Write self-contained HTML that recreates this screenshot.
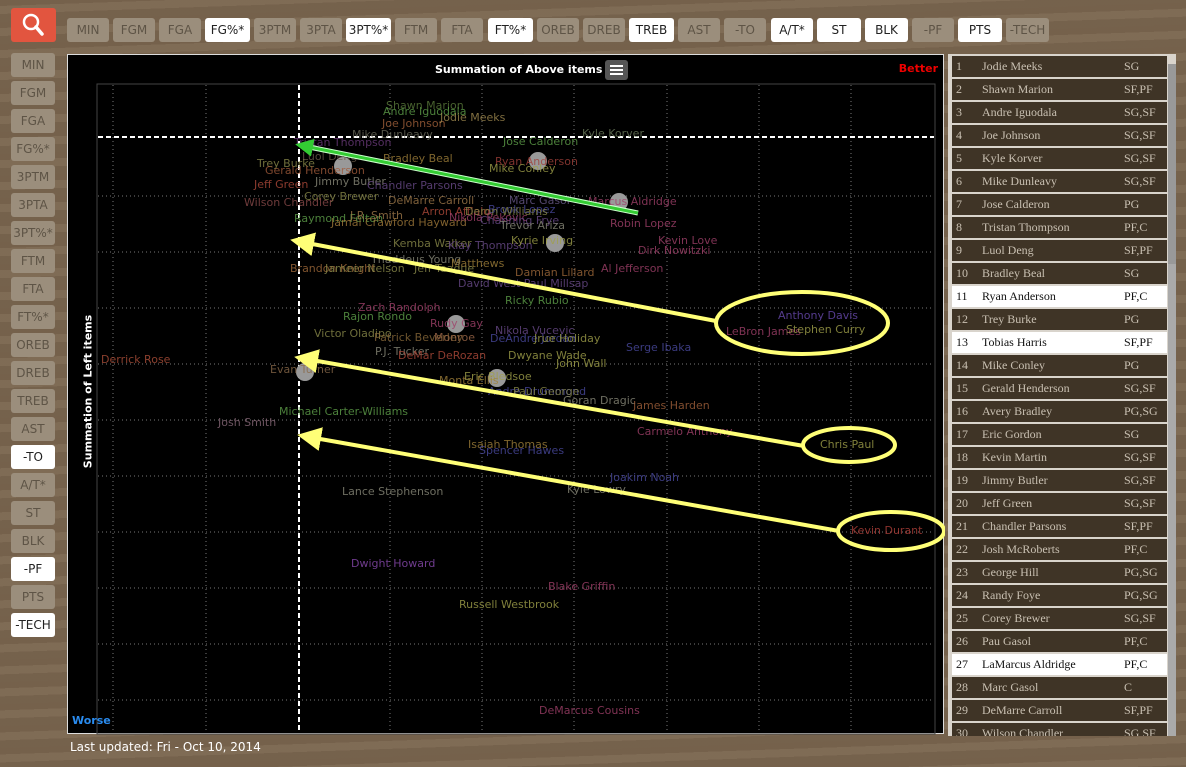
<!DOCTYPE html>
<html><head><meta charset="utf-8"><style>
*{margin:0;padding:0;box-sizing:border-box}
body{width:1186px;height:767px;overflow:hidden;background:#7a6650;background-image:repeating-linear-gradient(178deg,rgba(60,40,20,.08) 0 6px,rgba(255,240,210,.04) 6px 14px,rgba(40,25,10,.06) 14px 22px);font-family:"DejaVu Sans","Liberation Sans",sans-serif;position:relative}
.b{position:absolute;height:24px;background:#9b8e7c;color:#5e5446;font-size:12px;text-align:center;line-height:24px;border-radius:3px}
.w{background:#fff;color:#222}
#chart{position:absolute;left:67px;top:54px;width:877px;height:680px;background:#000;border:1px solid #ddd}
.t{position:absolute;font-size:11px;white-space:nowrap;line-height:12px;opacity:.8}
#list{position:absolute;left:948px;top:54px;width:228px;height:682px;background:#d9d4cc;overflow:hidden}
.r{position:absolute;left:4px;width:215px;height:21px;background:#3f3426;color:#c9c0b2;font-family:"Liberation Serif",serif;font-size:12px;line-height:21px}
.r span{position:absolute}
.r.w{background:#fff;color:#111}
</style></head><body>
<div style="position:absolute;left:11px;top:8px;width:45px;height:34px;background:#e2553f;border-radius:3px">
<svg width="45" height="34"><circle cx="20" cy="14" r="7" fill="none" stroke="#fff" stroke-width="2.5"/><line x1="25" y1="19" x2="31" y2="26" stroke="#fff" stroke-width="3.5" stroke-linecap="round"/></svg></div>
<div class="b" style="left:67px;top:18px;width:42px">MIN</div>
<div class="b" style="left:113px;top:18px;width:42px">FGM</div>
<div class="b" style="left:159px;top:18px;width:42px">FGA</div>
<div class="b w" style="left:205px;top:18px;width:45px">FG%*</div>
<div class="b" style="left:254px;top:18px;width:42px">3PTM</div>
<div class="b" style="left:300px;top:18px;width:42px">3PTA</div>
<div class="b w" style="left:346px;top:18px;width:45px">3PT%*</div>
<div class="b" style="left:395px;top:18px;width:42px">FTM</div>
<div class="b" style="left:441px;top:18px;width:42px">FTA</div>
<div class="b w" style="left:488px;top:18px;width:45px">FT%*</div>
<div class="b" style="left:537px;top:18px;width:42px">OREB</div>
<div class="b" style="left:583px;top:18px;width:42px">DREB</div>
<div class="b w" style="left:629px;top:18px;width:45px">TREB</div>
<div class="b" style="left:678px;top:18px;width:42px">AST</div>
<div class="b" style="left:724px;top:18px;width:42px">-TO</div>
<div class="b w" style="left:771px;top:18px;width:42px">A/T*</div>
<div class="b w" style="left:817px;top:18px;width:44px">ST</div>
<div class="b w" style="left:865px;top:18px;width:43px">BLK</div>
<div class="b" style="left:912px;top:18px;width:42px">-PF</div>
<div class="b w" style="left:958px;top:18px;width:44px">PTS</div>
<div class="b" style="left:1006px;top:18px;width:43px">-TECH</div>

<div class="b" style="left:11px;top:53px;width:44px">MIN</div>
<div class="b" style="left:11px;top:81px;width:44px">FGM</div>
<div class="b" style="left:11px;top:109px;width:44px">FGA</div>
<div class="b" style="left:11px;top:137px;width:44px">FG%*</div>
<div class="b" style="left:11px;top:165px;width:44px">3PTM</div>
<div class="b" style="left:11px;top:193px;width:44px">3PTA</div>
<div class="b" style="left:11px;top:221px;width:44px">3PT%*</div>
<div class="b" style="left:11px;top:249px;width:44px">FTM</div>
<div class="b" style="left:11px;top:277px;width:44px">FTA</div>
<div class="b" style="left:11px;top:305px;width:44px">FT%*</div>
<div class="b" style="left:11px;top:333px;width:44px">OREB</div>
<div class="b" style="left:11px;top:361px;width:44px">DREB</div>
<div class="b" style="left:11px;top:389px;width:44px">TREB</div>
<div class="b" style="left:11px;top:417px;width:44px">AST</div>
<div class="b w" style="left:11px;top:445px;width:44px">-TO</div>
<div class="b" style="left:11px;top:473px;width:44px">A/T*</div>
<div class="b" style="left:11px;top:501px;width:44px">ST</div>
<div class="b" style="left:11px;top:529px;width:44px">BLK</div>
<div class="b w" style="left:11px;top:557px;width:44px">-PF</div>
<div class="b" style="left:11px;top:585px;width:44px">PTS</div>
<div class="b w" style="left:11px;top:613px;width:44px">-TECH</div>

<div id="chart">
<svg width="877" height="680" style="position:absolute;left:0;top:0">
<rect x="29" y="29" width="838" height="650" fill="none" stroke="#444"/>
<g stroke="#777" stroke-dasharray="1,3">
<line x1="45" y1="30" x2="45" y2="678"/><line x1="138" y1="30" x2="138" y2="678"/><line x1="322" y1="30" x2="322" y2="678"/><line x1="414" y1="30" x2="414" y2="678"/><line x1="506" y1="30" x2="506" y2="678"/><line x1="599" y1="30" x2="599" y2="678"/><line x1="691" y1="30" x2="691" y2="678"/><line x1="783" y1="30" x2="783" y2="678"/>
<line x1="30" y1="141" x2="866" y2="141"/><line x1="30" y1="197" x2="866" y2="197"/><line x1="30" y1="253" x2="866" y2="253"/><line x1="30" y1="309" x2="866" y2="309"/><line x1="30" y1="365" x2="866" y2="365"/><line x1="30" y1="421" x2="866" y2="421"/><line x1="30" y1="477" x2="866" y2="477"/><line x1="30" y1="533" x2="866" y2="533"/><line x1="30" y1="589" x2="866" y2="589"/><line x1="30" y1="645" x2="866" y2="645"/>
</g>
<g stroke="#fff" stroke-width="2" stroke-dasharray="5,3"><line x1="231" y1="30" x2="231" y2="678"/><line x1="30" y1="82" x2="866" y2="82"/></g>
<g fill="#999"><circle cx="275" cy="111" r="9"/><circle cx="551" cy="147" r="9"/><circle cx="487" cy="188" r="9"/><circle cx="388" cy="269" r="9"/><circle cx="237" cy="317" r="9"/><circle cx="429" cy="323" r="9"/><circle cx="470" cy="106" r="9"/></g>
</svg>
<div style="position:absolute;left:367px;top:8px;color:#fff;font-size:11px;font-weight:bold">Summation of Above items</div>
<div style="position:absolute;left:537px;top:5px;width:23px;height:20px;background:#555;border-radius:3px"><div style="margin:5px 5px;height:10px;border-top:2px solid #fff;border-bottom:2px solid #fff"><div style="margin-top:2px;border-top:2px solid #fff"></div></div></div>
<div style="position:absolute;right:5px;top:7px;color:#e00;font-size:11px;font-weight:bold">Better</div>
<div style="position:absolute;left:4px;bottom:6px;color:#2a8cf0;font-size:11px;font-weight:bold">Worse</div>
<div style="position:absolute;left:-70px;top:330px;transform:rotate(-90deg);color:#fff;font-size:11px;font-weight:bold;width:180px;text-align:center;white-space:nowrap">Summation of Left items</div>
<div class="t" style="left:318px;top:45px;color:#5a7a3a">Shawn Marion</div>
<div class="t" style="left:315px;top:51px;color:#5fa04a">Andre Iguodala</div>
<div class="t" style="left:314px;top:63px;color:#a0603a">Joe Johnson</div>
<div class="t" style="left:372px;top:57px;color:#a08a50">Jodie Meeks</div>
<div class="t" style="left:284px;top:74px;color:#6a6a5a">Mike Dunleavy</div>
<div class="t" style="left:514px;top:73px;color:#6a7a5a">Kyle Korver</div>
<div class="t" style="left:435px;top:81px;color:#5fa04a">Jose Calderon</div>
<div class="t" style="left:226px;top:82px;color:#6a3a7a">Tristan Thompson</div>
<div class="t" style="left:234px;top:96px;color:#6a5a4a">Luol Deng</div>
<div class="t" style="left:315px;top:98px;color:#a0803a">Bradley Beal</div>
<div class="t" style="left:427px;top:101px;color:#a0403a">Ryan Anderson</div>
<div class="t" style="left:189px;top:103px;color:#8a8a4a">Trey Burke</div>
<div class="t" style="left:421px;top:108px;color:#a0a04a">Mike Conley</div>
<div class="t" style="left:197px;top:110px;color:#a05a3a">Gerald Henderson</div>
<div class="t" style="left:247px;top:121px;color:#8a8a7a">Jimmy Butler</div>
<div class="t" style="left:299px;top:125px;color:#6a4a8a">Chandler Parsons</div>
<div class="t" style="left:186px;top:124px;color:#b04a3a">Jeff Green</div>
<div class="t" style="left:236px;top:136px;color:#8a8a4a">Corey Brewer</div>
<div class="t" style="left:176px;top:142px;color:#8a4a4a">Wilson Chandler</div>
<div class="t" style="left:320px;top:140px;color:#a07a4a">DeMarre Carroll</div>
<div class="t" style="left:441px;top:140px;color:#6a5a8a">Marc Gasol</div>
<div class="t" style="left:520px;top:141px;color:#a0406a">Marcus Aldridge</div>
<div class="t" style="left:420px;top:149px;color:#4a4aa0">Brook Lopez</div>
<div class="t" style="left:226px;top:158px;color:#5fa04a">Raymond Felton</div>
<div class="t" style="left:354px;top:151px;color:#b04a3a">Arron Afflalo</div>
<div class="t" style="left:397px;top:151px;color:#8a8a4a">Deron Williams</div>
<div class="t" style="left:282px;top:155px;color:#a07a4a">J.R. Smith</div>
<div class="t" style="left:263px;top:162px;color:#a07a3a">Jamal Crawford Hayward</div>
<div class="t" style="left:381px;top:157px;color:#a0406a">Nikola Pekovic</div>
<div class="t" style="left:412px;top:160px;color:#6a4a8a">Channing Frye</div>
<div class="t" style="left:432px;top:165px;color:#8a8a7a">Trevor Ariza</div>
<div class="t" style="left:542px;top:163px;color:#a0406a">Robin Lopez</div>
<div class="t" style="left:325px;top:183px;color:#8a8a4a">Kemba Walker</div>
<div class="t" style="left:380px;top:185px;color:#6a4a8a">Klay Thompson</div>
<div class="t" style="left:443px;top:180px;color:#a0a04a">Kyrie Irving</div>
<div class="t" style="left:590px;top:180px;color:#a0406a">Kevin Love</div>
<div class="t" style="left:570px;top:190px;color:#a0406a">Dirk Nowitzki</div>
<div class="t" style="left:303px;top:199px;color:#8a8a7a">Thaddeus Young</div>
<div class="t" style="left:383px;top:203px;color:#a0803a">Matthews</div>
<div class="t" style="left:222px;top:208px;color:#a06a3a">Brandon Knight</div>
<div class="t" style="left:257px;top:208px;color:#8a8a4a">Jameer Nelson</div>
<div class="t" style="left:346px;top:208px;color:#8a8a4a">Jeff Teague</div>
<div class="t" style="left:447px;top:212px;color:#a06a3a">Damian Lillard</div>
<div class="t" style="left:533px;top:208px;color:#a0406a">Al Jefferson</div>
<div class="t" style="left:390px;top:223px;color:#6a4a8a">David West Paul Millsap</div>
<div class="t" style="left:437px;top:240px;color:#5fa04a">Ricky Rubio</div>
<div class="t" style="left:290px;top:247px;color:#a0406a">Zach Randolph</div>
<div class="t" style="left:275px;top:256px;color:#5fa04a">Rajon Rondo</div>
<div class="t" style="left:362px;top:263px;color:#a0406a">Rudy Gay</div>
<div class="t" style="left:427px;top:270px;color:#6a4a8a">Nikola Vucevic</div>
<div class="t" style="left:246px;top:273px;color:#8a8a4a">Victor Oladipo</div>
<div class="t" style="left:306px;top:277px;color:#8a6a3a">Patrick Beverley</div>
<div class="t" style="left:366px;top:277px;color:#a06a4a">Monroe</div>
<div class="t" style="left:422px;top:278px;color:#4a4aa0">DeAndre Jordan</div>
<div class="t" style="left:466px;top:278px;color:#a0a04a">Jrue Holiday</div>
<div class="t" style="left:558px;top:287px;color:#4a4aa0">Serge Ibaka</div>
<div class="t" style="left:307px;top:291px;color:#8a8a7a">P.J. Tucker</div>
<div class="t" style="left:330px;top:295px;color:#b04a3a">DeMar DeRozan</div>
<div class="t" style="left:440px;top:295px;color:#a0a04a">Dwyane Wade</div>
<div class="t" style="left:488px;top:303px;color:#a0a04a">John Wall</div>
<div class="t" style="left:33px;top:299px;color:#b0503a">Derrick Rose</div>
<div class="t" style="left:202px;top:309px;color:#8a6a4a">Evan Turner</div>
<div class="t" style="left:396px;top:316px;color:#a0a04a">Eric Bledsoe</div>
<div class="t" style="left:371px;top:320px;color:#a0803a">Monta Ellis</div>
<div class="t" style="left:420px;top:331px;color:#4a4aa0">Andre Drummond</div>
<div class="t" style="left:445px;top:331px;color:#8a8a4a">Paul George</div>
<div class="t" style="left:495px;top:340px;color:#8a8a7a">Goran Dragic</div>
<div class="t" style="left:565px;top:345px;color:#a0603a">James Harden</div>
<div class="t" style="left:211px;top:351px;color:#5fa04a">Michael Carter-Williams</div>
<div class="t" style="left:150px;top:362px;color:#8a6a7a">Josh Smith</div>
<div class="t" style="left:569px;top:371px;color:#a0406a">Carmelo Anthony</div>
<div class="t" style="left:400px;top:384px;color:#a0803a">Isaiah Thomas</div>
<div class="t" style="left:411px;top:390px;color:#4a4aa0">Spencer Hawes</div>
<div class="t" style="left:542px;top:417px;color:#4a4aa0">Joakim Noah</div>
<div class="t" style="left:499px;top:429px;color:#8a8a7a">Kyle Lowry</div>
<div class="t" style="left:274px;top:431px;color:#8a8a7a">Lance Stephenson</div>
<div class="t" style="left:283px;top:503px;color:#8a4ab0">Dwight Howard</div>
<div class="t" style="left:480px;top:526px;color:#a0406a">Blake Griffin</div>
<div class="t" style="left:391px;top:544px;color:#a0a04a">Russell Westbrook</div>
<div class="t" style="left:471px;top:650px;color:#a0406a">DeMarcus Cousins</div>
<div class="t" style="left:710px;top:255px;color:#6a4ab0">Anthony Davis</div>
<div class="t" style="left:658px;top:271px;color:#a0406a">LeBron James</div>
<div class="t" style="left:718px;top:269px;color:#a0a04a">Stephen Curry</div>
<div class="t" style="left:752px;top:384px;color:#a0a04a">Chris Paul</div>
<div class="t" style="left:783px;top:470px;color:#b0403a">Kevin Durant</div>
<svg width="877" height="680" style="position:absolute;left:0;top:0">
<defs><marker id="g" markerWidth="6" markerHeight="6" refX="3" refY="3" orient="auto"><path d="M0,0 L6,3 L0,6z" fill="#3c3"/></marker><marker id="y" markerWidth="6" markerHeight="6" refX="3" refY="3" orient="auto"><path d="M0,0 L6,3 L0,6z" fill="#ff7"/></marker></defs>
<line x1="570" y1="158" x2="236" y2="91" stroke="#cfc" stroke-width="5"/>
<line x1="570" y1="158" x2="236" y2="91" stroke="#3c3" stroke-width="3" marker-end="url(#g)"/>
<g stroke="#ff7" stroke-width="4" fill="none">
<line x1="648" y1="266" x2="234" y2="187" marker-end="url(#y)"/>
<line x1="736" y1="391" x2="238" y2="304" marker-end="url(#y)"/>
<line x1="771" y1="476" x2="241" y2="382" marker-end="url(#y)"/>
<ellipse cx="734" cy="268" rx="86" ry="31"/>
<ellipse cx="781" cy="390" rx="46" ry="17"/>
<ellipse cx="823" cy="476" rx="53" ry="19"/>
</g></svg>
</div>

<div id="list">
<div style="position:absolute;left:220px;top:10px;width:8px;height:672px;background:#aaa"></div>
<div style="position:absolute;left:220px;top:10px;width:8px;height:200px;background:#999"></div>
<div class="r" style="top:2px"><span style="left:4px">1</span><span style="left:30px">Jodie Meeks</span><span style="left:172px">SG</span></div>
<div class="r" style="top:25px"><span style="left:4px">2</span><span style="left:30px">Shawn Marion</span><span style="left:172px">SF,PF</span></div>
<div class="r" style="top:48px"><span style="left:4px">3</span><span style="left:30px">Andre Iguodala</span><span style="left:172px">SG,SF</span></div>
<div class="r" style="top:71px"><span style="left:4px">4</span><span style="left:30px">Joe Johnson</span><span style="left:172px">SG,SF</span></div>
<div class="r" style="top:94px"><span style="left:4px">5</span><span style="left:30px">Kyle Korver</span><span style="left:172px">SG,SF</span></div>
<div class="r" style="top:117px"><span style="left:4px">6</span><span style="left:30px">Mike Dunleavy</span><span style="left:172px">SG,SF</span></div>
<div class="r" style="top:140px"><span style="left:4px">7</span><span style="left:30px">Jose Calderon</span><span style="left:172px">PG</span></div>
<div class="r" style="top:163px"><span style="left:4px">8</span><span style="left:30px">Tristan Thompson</span><span style="left:172px">PF,C</span></div>
<div class="r" style="top:186px"><span style="left:4px">9</span><span style="left:30px">Luol Deng</span><span style="left:172px">SF,PF</span></div>
<div class="r" style="top:209px"><span style="left:4px">10</span><span style="left:30px">Bradley Beal</span><span style="left:172px">SG</span></div>
<div class="r w" style="top:232px"><span style="left:4px">11</span><span style="left:30px">Ryan Anderson</span><span style="left:172px">PF,C</span></div>
<div class="r" style="top:255px"><span style="left:4px">12</span><span style="left:30px">Trey Burke</span><span style="left:172px">PG</span></div>
<div class="r w" style="top:278px"><span style="left:4px">13</span><span style="left:30px">Tobias Harris</span><span style="left:172px">SF,PF</span></div>
<div class="r" style="top:301px"><span style="left:4px">14</span><span style="left:30px">Mike Conley</span><span style="left:172px">PG</span></div>
<div class="r" style="top:324px"><span style="left:4px">15</span><span style="left:30px">Gerald Henderson</span><span style="left:172px">SG,SF</span></div>
<div class="r" style="top:347px"><span style="left:4px">16</span><span style="left:30px">Avery Bradley</span><span style="left:172px">PG,SG</span></div>
<div class="r" style="top:370px"><span style="left:4px">17</span><span style="left:30px">Eric Gordon</span><span style="left:172px">SG</span></div>
<div class="r" style="top:393px"><span style="left:4px">18</span><span style="left:30px">Kevin Martin</span><span style="left:172px">SG,SF</span></div>
<div class="r" style="top:416px"><span style="left:4px">19</span><span style="left:30px">Jimmy Butler</span><span style="left:172px">SG,SF</span></div>
<div class="r" style="top:439px"><span style="left:4px">20</span><span style="left:30px">Jeff Green</span><span style="left:172px">SG,SF</span></div>
<div class="r" style="top:462px"><span style="left:4px">21</span><span style="left:30px">Chandler Parsons</span><span style="left:172px">SF,PF</span></div>
<div class="r" style="top:485px"><span style="left:4px">22</span><span style="left:30px">Josh McRoberts</span><span style="left:172px">PF,C</span></div>
<div class="r" style="top:508px"><span style="left:4px">23</span><span style="left:30px">George Hill</span><span style="left:172px">PG,SG</span></div>
<div class="r" style="top:531px"><span style="left:4px">24</span><span style="left:30px">Randy Foye</span><span style="left:172px">PG,SG</span></div>
<div class="r" style="top:554px"><span style="left:4px">25</span><span style="left:30px">Corey Brewer</span><span style="left:172px">SG,SF</span></div>
<div class="r" style="top:577px"><span style="left:4px">26</span><span style="left:30px">Pau Gasol</span><span style="left:172px">PF,C</span></div>
<div class="r w" style="top:600px"><span style="left:4px">27</span><span style="left:30px">LaMarcus Aldridge</span><span style="left:172px">PF,C</span></div>
<div class="r" style="top:623px"><span style="left:4px">28</span><span style="left:30px">Marc Gasol</span><span style="left:172px">C</span></div>
<div class="r" style="top:646px"><span style="left:4px">29</span><span style="left:30px">DeMarre Carroll</span><span style="left:172px">SF,PF</span></div>
<div class="r" style="top:669px"><span style="left:4px">30</span><span style="left:30px">Wilson Chandler</span><span style="left:172px">SG,SF</span></div>
</div>
<div style="position:absolute;left:70px;top:740px;color:#fff;font-size:12px">Last updated: Fri - Oct 10, 2014</div>
</body></html>
